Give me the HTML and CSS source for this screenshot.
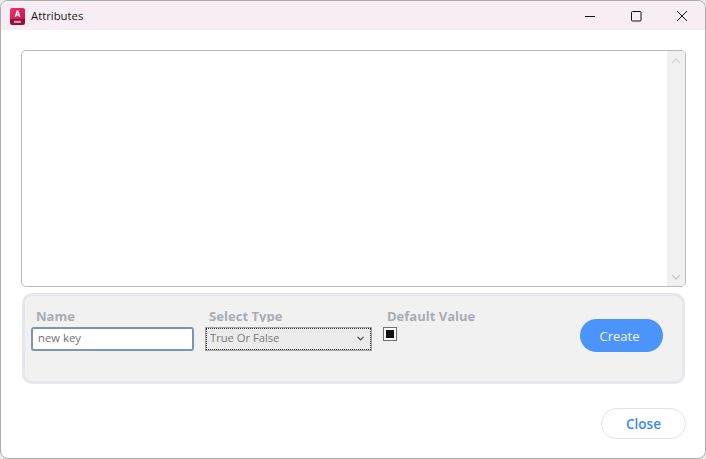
FILE: index.html
```html
<!DOCTYPE html>
<html lang="en">
<head>
<meta charset="utf-8">
<title>Attributes</title>
<link rel="stylesheet" href="styles.css">
</head>
<body>
<div class="window">
  <header class="titlebar">
    <svg class="app-icon" width="15" height="17" viewBox="0 0 15 17">
      <defs>
        <linearGradient id="appGrad" x1="0" y1="0" x2="1" y2="1">
          <stop offset="0" stop-color="#f0326e"/>
          <stop offset="1" stop-color="#d3104f"/>
        </linearGradient>
      </defs>
      <path d="M2 0H13Q15 0 15 2V11H0V2Q0 0 2 0Z" fill="url(#appGrad)"/>
      <path d="M0 11H15V15Q15 17 13 17H2Q0 17 0 15Z" fill="#8f1238"/>
      <path d="M4.6 9L6.6 2.5H8.4L10.4 9H8.9L8.5 7.6H6.5L6.1 9ZM6.9 6.3H8.1L7.5 4.2Z" fill="#fff"/>
      <path d="M4 12.8H11V15H4Z" fill="#e38aa6"/>
    </svg>
    <span class="title">Attributes</span>
    <div class="controls">
      <svg class="ctl" width="46" height="29" viewBox="0 0 46 29"><path d="M18 15.5H28" stroke="#111" fill="none"/></svg>
      <svg class="ctl" width="46" height="29" viewBox="0 0 46 29"><rect x="18.5" y="10.5" width="9.5" height="9.5" rx="1" stroke="#111" fill="none"/></svg>
      <svg class="ctl" width="46" height="29" viewBox="0 0 46 29"><path d="M18 10L28 20M28 10L18 20" stroke="#111" fill="none"/></svg>
    </div>
  </header>
  <main class="content">
    <div class="listbox">
      <div class="list-body"></div>
      <div class="scrollbar">
        <svg width="18" height="18" viewBox="0 0 18 18"><path d="M5 12L9 8L13 12" stroke="#d4d4d4" stroke-width="1.3" fill="none"/></svg>
        <svg width="18" height="18" viewBox="0 0 18 18"><path d="M5 7L9 11L13 7" stroke="#c8c8c8" stroke-width="1.3" fill="none"/></svg>
      </div>
    </div>
    <form class="panel">
      <div class="field field-name">
        <span class="label">Name</span>
        <input class="text-input" type="text" value="new key">
      </div>
      <div class="field field-type">
        <span class="label">Select Type</span>
        <div class="select">
          <span class="select-text">True Or False</span>
          <svg class="chevron" width="7" height="5" viewBox="0 0 7 5"><path d="M0.5 0.8L3.5 3.8L6.5 0.8" stroke="#444" stroke-width="1.2" fill="none"/></svg>
        </div>
      </div>
      <div class="field field-default">
        <span class="label">Default Value</span>
        <span class="check"><span class="check-mark"></span></span>
      </div>
      <button class="btn-create" type="button">Create</button>
    </form>
    <div class="footer">
      <button class="btn-close" type="button">Close</button>
    </div>
  </main>
</div>
</body>
</html>
```

FILE: styles.css
```css
* {
  box-sizing: border-box;
}

html, body {
  margin: 0;
  height: 100%;
  background: #e9e9e9;
  overflow: hidden;
}

body {
  font-family: "Open Sans", "Noto Sans", sans-serif;
}

.window {
  width: 706px;
  height: 459px;
  background: #fff;
  border: 1px solid #ababab;
  border-radius: 8px;
  overflow: hidden;
  display: flex;
  flex-direction: column;
}

.titlebar {
  height: 29px;
  flex: none;
  background: #f7eef5;
  display: flex;
  align-items: center;
  padding-left: 9px;
}

.app-icon {
  flex: none;
  margin-top: 1px;
}

.title {
  margin-left: 6px;
  font-size: 11.3px;
  color: #1a1a1a;
}

.controls {
  margin-left: auto;
  display: flex;
}

.ctl {
  display: block;
  margin-top: -1px;
}

.content {
  flex: 1;
  padding: 20px 19px 0 20px;
  display: flex;
  flex-direction: column;
}

.listbox {
  height: 237px;
  border: 1px solid #b9b9b9;
  border-radius: 5px;
  overflow: hidden;
  display: flex;
  background: #fff;
}

.list-body {
  flex: 1;
}

.scrollbar {
  width: 18px;
  background: #f0f0f0;
  display: flex;
  flex-direction: column;
  justify-content: space-between;
}

.scrollbar svg {
  display: block;
}

.panel {
  height: 91px;
  margin: 6px 0 0 1px;
  width: 663px;
  background: #f1f1f1;
  border: 3px solid #e6e6ec;
  border-radius: 10px;
  display: flex;
  padding: 12px 0 0 6px;
  position: relative;
}

.field {
  display: flex;
  flex-direction: column;
}

.field-name {
  width: 163px;
}

.field-type {
  width: 167px;
  margin-left: 11px;
}

.field-default {
  margin-left: 11px;
}

.label {
  display: block;
  height: 19px;
  padding-left: 5px;
  font-size: 13px;
  line-height: 17px;
  font-weight: 700;
  color: #a6adb6;
}

.field-type .label {
  padding-left: 4px;
  height: 14px;
  margin-bottom: 5px;
  overflow: hidden;
  font-size: 13.1px;
}

.field-default .label {
  padding-left: 4px;
}

.text-input {
  width: 163px;
  height: 24px;
  border: 2px solid #7b96ad;
  border-radius: 3px;
  background: #fff;
  padding: 0 5px 3px;
  font-family: inherit;
  font-size: 11.3px;
  color: #6f6f6f;
  outline: none;
}

.select {
  width: 167px;
  height: 24px;
  border: 1px solid #a0a0a0;
  outline: 1px dotted #333;
  outline-offset: -2px;
  background: #ebebeb;
  display: flex;
  align-items: center;
  justify-content: space-between;
  padding: 0 7px 3px 4px;
}

.select-text {
  font-size: 11.2px;
  color: #7a7a7a;
}

.chevron {
  margin-top: 2px;
}

.check {
  display: flex;
  align-items: center;
  justify-content: center;
  width: 14px;
  height: 14px;
  background: #fff;
  border: 1px solid #6f6f6f;
}

.check-mark {
  width: 8px;
  height: 8px;
  background: #111;
}

.btn-create {
  position: absolute;
  left: 555px;
  top: 23px;
  width: 83px;
  height: 33px;
  border: none;
  border-radius: 17px;
  background: #4a94fb;
  color: #f2f7ff;
  padding: 0 4px 0 0;
  font-family: inherit;
  font-size: 13px;
}

.footer {
  display: flex;
  justify-content: flex-end;
  margin-top: 24px;
}

.btn-close {
  width: 85px;
  height: 31px;
  border: 1px solid #dde4ee;
  border-radius: 16px;
  background: #fff;
  color: #3f86f0;
  font-family: inherit;
  font-size: 13.5px;
  font-weight: 600;
}
```
